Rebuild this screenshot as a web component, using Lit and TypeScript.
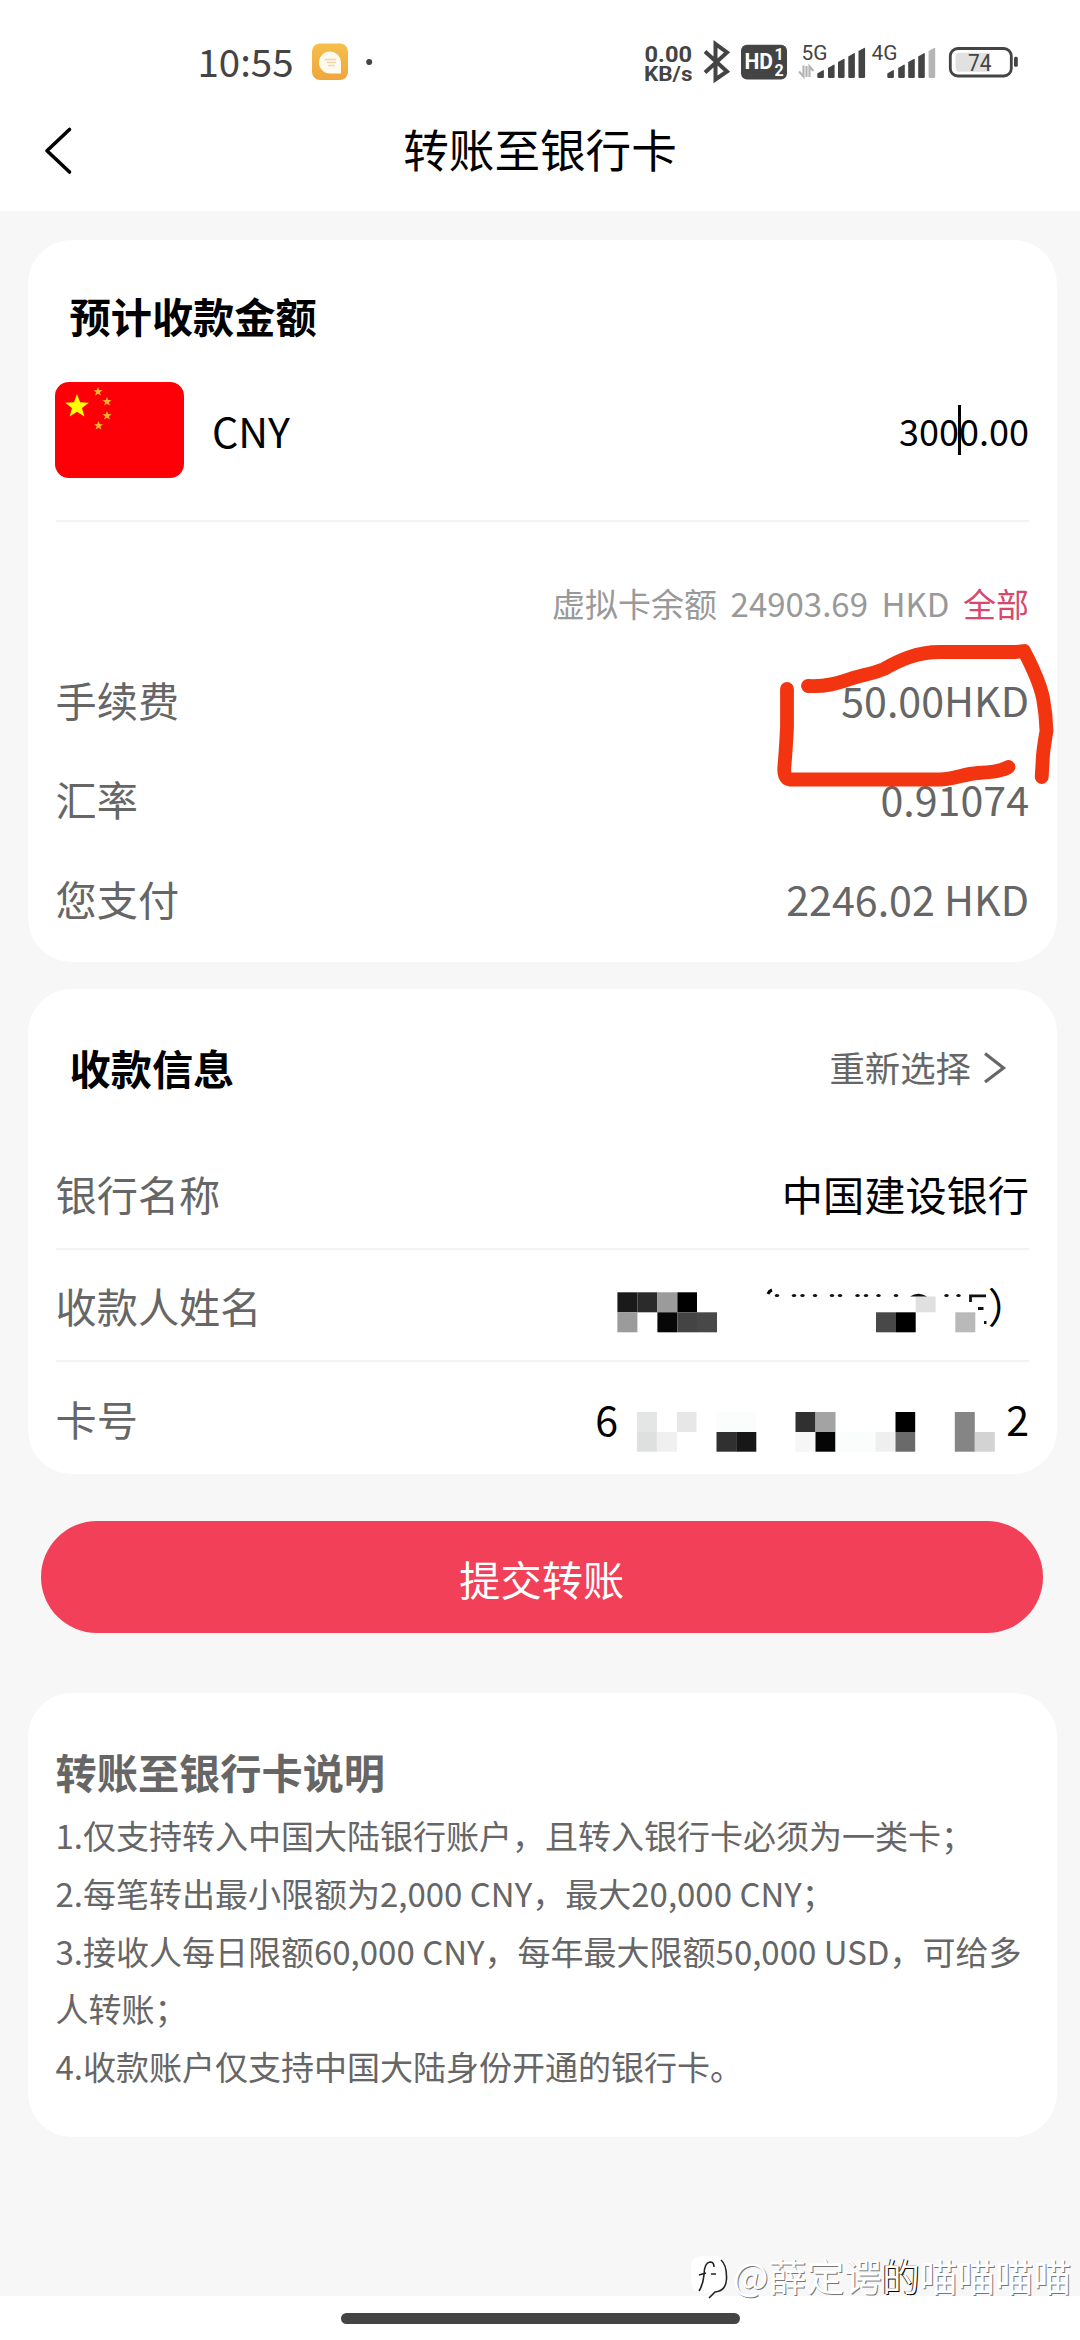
import { LitElement, html, css, svg } from "lit";
import { customElement } from "lit/decorators.js";

const star = (cx: number, cy: number, r: number) => {
  const pts: string[] = [];
  for (let i = 0; i < 10; i++) {
    const a = -Math.PI / 2 + (i * Math.PI) / 5;
    const q = i % 2 ? r * 0.42 : r;
    pts.push(`${(cx + q * Math.cos(a)).toFixed(2)},${(cy + q * Math.sin(a)).toFixed(2)}`);
  }
  return pts.join(" ");
};

type Cell = [number, number, number, number, string];

const nameCells: Cell[] = [
  [616.4, 1292.3, 20, 20, "#1a1a1a"], [636.4, 1292.3, 20, 20, "#2b2b2b"],
  [656.4, 1292.3, 20, 20, "#9b9b9b"], [676.4, 1292.3, 19.6, 20, "#000"],
  [616.4, 1312.3, 20, 20, "#9b9b9b"], [656.4, 1312.3, 20, 20, "#070707"],
  [676.4, 1312.3, 20, 20, "#444"], [696, 1312.3, 20, 20, "#484848"],
  [875, 1312.3, 20, 20, "#484848"], [895, 1312.3, 19.7, 20, "#000"],
  [914.7, 1296.5, 19.9, 15.8, "#e0e0e0"], [954.3, 1312.3, 20, 20, "#b9b9b9"],
];

const cardCells: Cell[] = [
  [636.4, 1412, 20, 20, "#e4e5e5"], [676.4, 1412, 19.6, 20, "#e7e7e7"],
  [636.4, 1432, 20, 19.7, "#dedfdf"], [656.4, 1432, 20, 19.7, "#f0f0f0"],
  [716, 1412, 39.7, 20, "#fafdfc"], [716, 1432, 20, 19.7, "#303030"],
  [735.8, 1432, 20, 19.7, "#171717"], [795, 1412, 20, 20, "#303030"],
  [815, 1412, 20, 20, "#a3a3a3"], [795, 1432, 20, 19.7, "#f6f6f6"],
  [815, 1432, 20, 19.7, "#050505"], [835, 1432, 40, 19.7, "#fafdfc"],
  [875, 1432, 20, 19.7, "#efefef"], [895, 1412, 19.7, 20, "#000"],
  [895, 1432, 19.7, 19.7, "#6a6a6a"], [954.3, 1412, 20, 39.7, "#858585"],
  [974.3, 1432, 20, 19.7, "#d3d3d3"],
];

const drawCells = (cells: Cell[]) =>
  cells.map(([x, y, w, h, c]) => svg`<rect x=${x} y=${y} width=${w} height=${h} fill=${c}></rect>`);

const dots = [776, 793, 801.5, 814, 831, 839, 856.5, 865, 877.5, 895, 945.5, 957.5];

const bars5: [number, number][] = [[817.3, 70], [828, 64.5], [838, 58.7], [848.3, 53], [858.5, 47.7]];
const bars4: [number, number][] = [[887.3, 70], [898.2, 64.5], [908.2, 58.7], [918.2, 53], [928.6, 47.7]];
const bar = ([x, y]: [number, number], fill: string) =>
  svg`<path fill=${fill} d="M${x} ${y + 3.4}L${x + 6} ${y}Q${x + 6.6} ${y} ${x + 6.6} ${y + 1}V76.8Q${x + 6.6} 78 ${x + 5.4} 78H${x + 1.2}Q${x} 78 ${x} 76.8Z"></path>`;

@customElement("app-root")
export class AppRoot extends LitElement {
  static styles = css`
    :host {
      display: flex;
      flex-direction: column;
      position: relative;
      width: 1080px;
      height: 2340px;
      overflow: hidden;
      background: #f7f7f7;
      color: #000;
      font-family: "Noto Sans CJK SC", "Noto Sans", sans-serif;
      font-size: 41.2px;
      line-height: 60px;
      text-autospace: no-autospace;
      box-sizing: border-box;
    }
    svg { display: block; flex: none; }
    .status { height: 92px; background: #fff; flex: none; }
    .status text { font-family: Roboto, sans-serif; fill: #444; }
    .status .clock { font-family: "Noto Sans CJK SC", sans-serif; }
    .nav {
      height: 119px;
      flex: none;
      background: #fff;
      display: grid;
      grid-template-columns: 1fr auto 1fr;
      align-items: start;
    }
    .back { margin: 32px 0 0 42px; }
    .title { font-size: 45.6px; line-height: 66px; padding-top: 23px; }
    .main { padding: 29px 23.5px 0 28px; display: flex; flex-direction: column; flex: none; }
    .card { background: #fff; border-radius: 44px; padding: 0 27.5px; box-sizing: border-box; }
    .amount { height: 722px; padding-top: 45px; margin-bottom: 27px; }
    .payee { height: 485px; padding-top: 7px; }
    .heading { font-size: 41.2px; font-weight: 700; padding-left: 14px; }
    .currency { display: flex; align-items: center; height: 96px; margin-top: 37px; }
    .code { margin-left: 28px; flex: 1; }
    .flag { margin-left: -0.5px; }
    .field { display: flex; align-items: center; font-size: 36px; line-height: 50px; }
    .caret { width: 3px; height: 50px; margin: 0 -1.5px; background: #000; }
    .rule { height: 2px; background: #f3f3f3; }
    .currency + .rule { margin-top: 42px; }
    .balance {
      display: flex;
      justify-content: flex-end;
      align-items: center;
      gap: 13.5px;
      height: 92px;
      margin-top: 35px;
      font-size: 33px;
      color: #999;
    }
    .all { color: #d8486c; }
    .row { display: flex; justify-content: space-between; align-items: center; height: 99.6px; color: #666; }
    .payhead { display: flex; justify-content: space-between; align-items: center; height: 142px; }
    .again { display: flex; align-items: center; color: #666; font-size: 35.4px; padding-right: 22px; gap: 12px; }
    .info { height: 110px; }
    .info.last { height: 111px; }
    .label { color: #666; }
    .value { color: #000; display: flex; align-items: center; }
    .submit {
      height: 112px;
      margin: 47px 14px 60px 13px;
      border-radius: 56px;
      background: #f24059;
      color: #fff;
      border: 0;
      font: inherit;
      padding: 1px 0 0;
    }
    .notes { height: 444px; padding-top: 48px; color: #666; }
    .notes-title { font-weight: 700; height: 60px; margin-bottom: 6px; }
    .line { font-size: 33px; line-height: 57.8px; }
    .navbar {
      margin-top: auto;
      height: 44px;
      flex: none;
      background: #fff;
      display: flex;
      justify-content: center;
      align-items: flex-start;
    }
    .pill { width: 399px; height: 11px; border-radius: 6px; background: #444; margin-top: 17px; }
    .marker { position: absolute; left: 0; top: 0; pointer-events: none; }
    .watermark {
      position: absolute;
      right: 9px;
      bottom: 37px;
      display: flex;
      align-items: center;
      font-size: 37.8px;
      line-height: 56px;
      color: #fff;
      text-shadow: 1px 1px 0 #777;
      white-space: nowrap;
    }
    .watermark .strong { text-shadow: -1px 0 0 #333, 1px 1px 0 #000; }
  `;

  private row(label: string, value: string) {
    return html`<div class="row"><span>${label}</span><span>${value}</span></div>`;
  }

  render() {
    return html`
      <svg class="status" width="1080" height="92" viewBox="0 0 1080 92">
        <defs>
          <linearGradient id="app" x1="0" y1="0" x2="0" y2="1">
            <stop offset="0" stop-color="#f5bf4a"></stop>
            <stop offset="1" stop-color="#efa63c"></stop>
          </linearGradient>
        </defs>
        <text class="clock" x="197.5" y="76.5" font-size="38.5" textLength="96">10:55</text>
        <rect x="312" y="43.5" width="36" height="36.5" rx="8" fill="url(#app)"></rect>
        <path d="M330 51.5a11 11 0 0 0 0 22H341V62a11 11 0 0 0-11-10.5Z" fill="#fffaf0"></path>
        <path d="M324.5 59.5h11.500M327 62.500h9M328 65.500h7" stroke="#f3d6a8" stroke-width="1.500"></path>
        <circle cx="369.200" cy="62" r="3" fill="#444"></circle>
        <text x="644.500" y="62.300" font-size="22.500" font-weight="700" textLength="47.500" lengthAdjust="spacingAndGlyphs">0.00</text>
        <text x="644" y="80.700" font-size="20.500" font-weight="700" textLength="48.500" lengthAdjust="spacingAndGlyphs">KB/s</text>
        <path d="M705 51.500L727 71.500L715.500 79.500V44L727 52.500L705 72.500" fill="none" stroke="#444" stroke-width="4"></path>
        <rect x="741" y="44.700" width="46" height="34.800" rx="6" fill="#444"></rect>
        <text x="744.500" y="69.300" font-size="22" font-weight="700" textLength="28.500" lengthAdjust="spacingAndGlyphs" style="fill:#fff">HD</text>
        <text x="774.500" y="60.300" font-size="16" font-weight="700" style="fill:#fff">1</text>
        <text x="774.500" y="75.700" font-size="16" font-weight="700" style="fill:#fff">2</text>
        <text x="801.500" y="60" font-size="20.500" textLength="26" lengthAdjust="spacingAndGlyphs">5G</text>
        <path d="M799 71.500l4.500 5V65.500M806.500 77V66M809.500 77V66.500l4 4.500" fill="none" stroke="#b5b5b5" stroke-width="2.200"></path>
        ${bars5.map((b) => bar(b, "#444"))}
        <text x="871.500" y="60" font-size="20.500" textLength="26" lengthAdjust="spacingAndGlyphs">4G</text>
        ${bars4.map((b, i) => bar(b, i === 4 ? "#b5b5b5" : "#444"))}
        <rect x="950.300" y="48.500" width="61" height="27.500" rx="7.500" fill="#fff" stroke="#444" stroke-width="2.800"></rect>
        <path d="M959 52.700H990V71.700H959Q955.500 71.700 955.500 68V56.500Q955.500 52.700 959 52.700Z" fill="#e1e1e1"></path>
        <rect x="1014" y="56.700" width="3.800" height="10" rx="1.500" fill="#444"></rect>
        <text x="968" y="70.500" font-size="23" textLength="23.500" lengthAdjust="spacingAndGlyphs">74</text>
      </svg>
      <div class="nav">
        <svg class="back" width="32" height="56" viewBox="42 124 32 56">
          <path d="M69.500 129.500L47 150.800L69.500 172" fill="none" stroke="#000" stroke-width="3.600" stroke-linecap="round" stroke-linejoin="round"></path>
        </svg>
        <div class="title">转账至银行卡</div>
      </div>

      <div class="main">
        <section class="card amount">
          <div class="heading">预计收款金额</div>
          <div class="currency">
            <svg class="flag" width="129" height="96" viewBox="55 382 129 96">
              <rect x="55" y="382" width="129" height="96" rx="14" fill="#fd0007"></rect>
              <polygon points=${star(77, 406.5, 12.5)} fill="#ff0"></polygon>
              ${[[98, 391.7], [107, 401.7], [107, 415.7], [98.5, 425.7]].map(
                ([x, y]) => svg`<polygon points=${star(x, y, 4.8)} fill="#ffb52b"></polygon>`
              )}
            </svg>
            <span class="code">CNY</span>
            <span class="field"><span>300</span><i class="caret"></i><span>0.00</span></span>
          </div>
          <div class="rule"></div>
          <div class="balance">
            <span>虚拟卡余额</span><span>24903.69</span><span>HKD</span><span class="all">全部</span>
          </div>
          ${this.row("手续费", "50.00HKD")}
          ${this.row("汇率", "0.91074")}
          ${this.row("您支付", "2246.02 HKD")}
        </section>

        <section class="card payee">
          <div class="payhead">
            <div class="heading">收款信息</div>
            <div class="again">
              <span>重新选择</span>
              <svg width="24" height="36" viewBox="983 1050 24 36">
                <path d="M985 1054.500L1003.500 1069L985 1083" fill="none" stroke="#666" stroke-width="3.200"></path>
              </svg>
            </div>
          </div>
          <div class="row info"><span class="label">银行名称</span><span class="value">中国建设银行</span></div>
          <div class="rule"></div>
          <div class="row info">
            <span class="label">收款人姓名</span>
            <span class="value">
              <svg width="377" height="110" viewBox="610 1250 377 110">
                ${drawCells(nameCells)}
                <path d="M767 1294Q768 1291 771 1290" stroke="#000" stroke-width="3" fill="none"></path>
                ${dots.map((x) => svg`<ellipse cx=${x} cy="1295.500" rx="2.200" ry="1.600" fill="#111"></ellipse>`)}
                <path d="M909 1296.500Q917 1291 926 1296.500Z" fill="#111"></path>
                <path d="M985 1295.800H969.500V1302M977 1308.500H982.500M983 1322.500H985.500" stroke="#111" stroke-width="2.800" fill="none"></path>
              </svg><span>）</span>
            </span>
          </div>
          <div class="rule"></div>
          <div class="row info last">
            <span class="label">卡号</span>
            <span class="value">
              <span>6</span><svg width="388" height="111" viewBox="617.500 1362 388 111">${drawCells(cardCells)}</svg><span>2</span>
            </span>
          </div>
        </section>

        <button class="submit">提交转账</button>

        <section class="card notes">
          <div class="notes-title">转账至银行卡说明</div>
          <div>
            <div class="line">1.仅支持转入中国大陆银行账户，且转入银行卡必须为一类卡；</div>
            <div class="line">2.每笔转出最小限额为2,000 CNY，最大20,000 CNY；</div>
            <div class="line">3.接收人每日限额60,000 CNY，每年最大限额50,000 USD，可给多人转账；</div>
            <div class="line">4.收款账户仅支持中国大陆身份开通的银行卡。</div>
          </div>
        </section>
      </div>

      <div class="navbar"><div class="pill"></div></div>

      <svg class="marker" width="1080" height="900" viewBox="0 0 1080 900">
        <g fill="none" stroke="#f23411" stroke-width="13.800" stroke-linecap="round" stroke-linejoin="round">
          <path d="M808 686C826 687 838 683 850 679C862 675 872 674 884 669C898 661 916 652 940 652H1016L1024 651C1034 670 1040 684 1043 698Q1046 714 1046.500 731Q1044 745 1043 755L1041.700 777"></path>
          <path d="M787 689V727Q786 748 784.500 765Q783 779 790 779.500H940C954 779 964 774 978 773Q1000 772 1008.500 767"></path>
        </g>
      </svg>

      <div class="watermark">
        <svg width="43" height="48" viewBox="688 2256 43 48">
          <path d="M689 2272Q689 2261 700 2261H714Q725 2262 725 2276V2285Q724 2297 712 2298L706 2303V2298Q689 2300 689 2286Z" fill="#fff"></path>
          <path d="M697 2296Q701 2290 702 2280Q702 2268 708 2267Q712 2267 712 2272M697 2280L704 2278M709 2279H714M719 2265Q725 2270 724.500 2284Q724 2296 713 2297L707 2303" fill="none" stroke="#222" stroke-width="1.600"></path>
        </svg>
        <span>@薛定谔</span><span class="strong">的</span><span>喵喵喵喵</span>
      </div>
    `;
  }
}
